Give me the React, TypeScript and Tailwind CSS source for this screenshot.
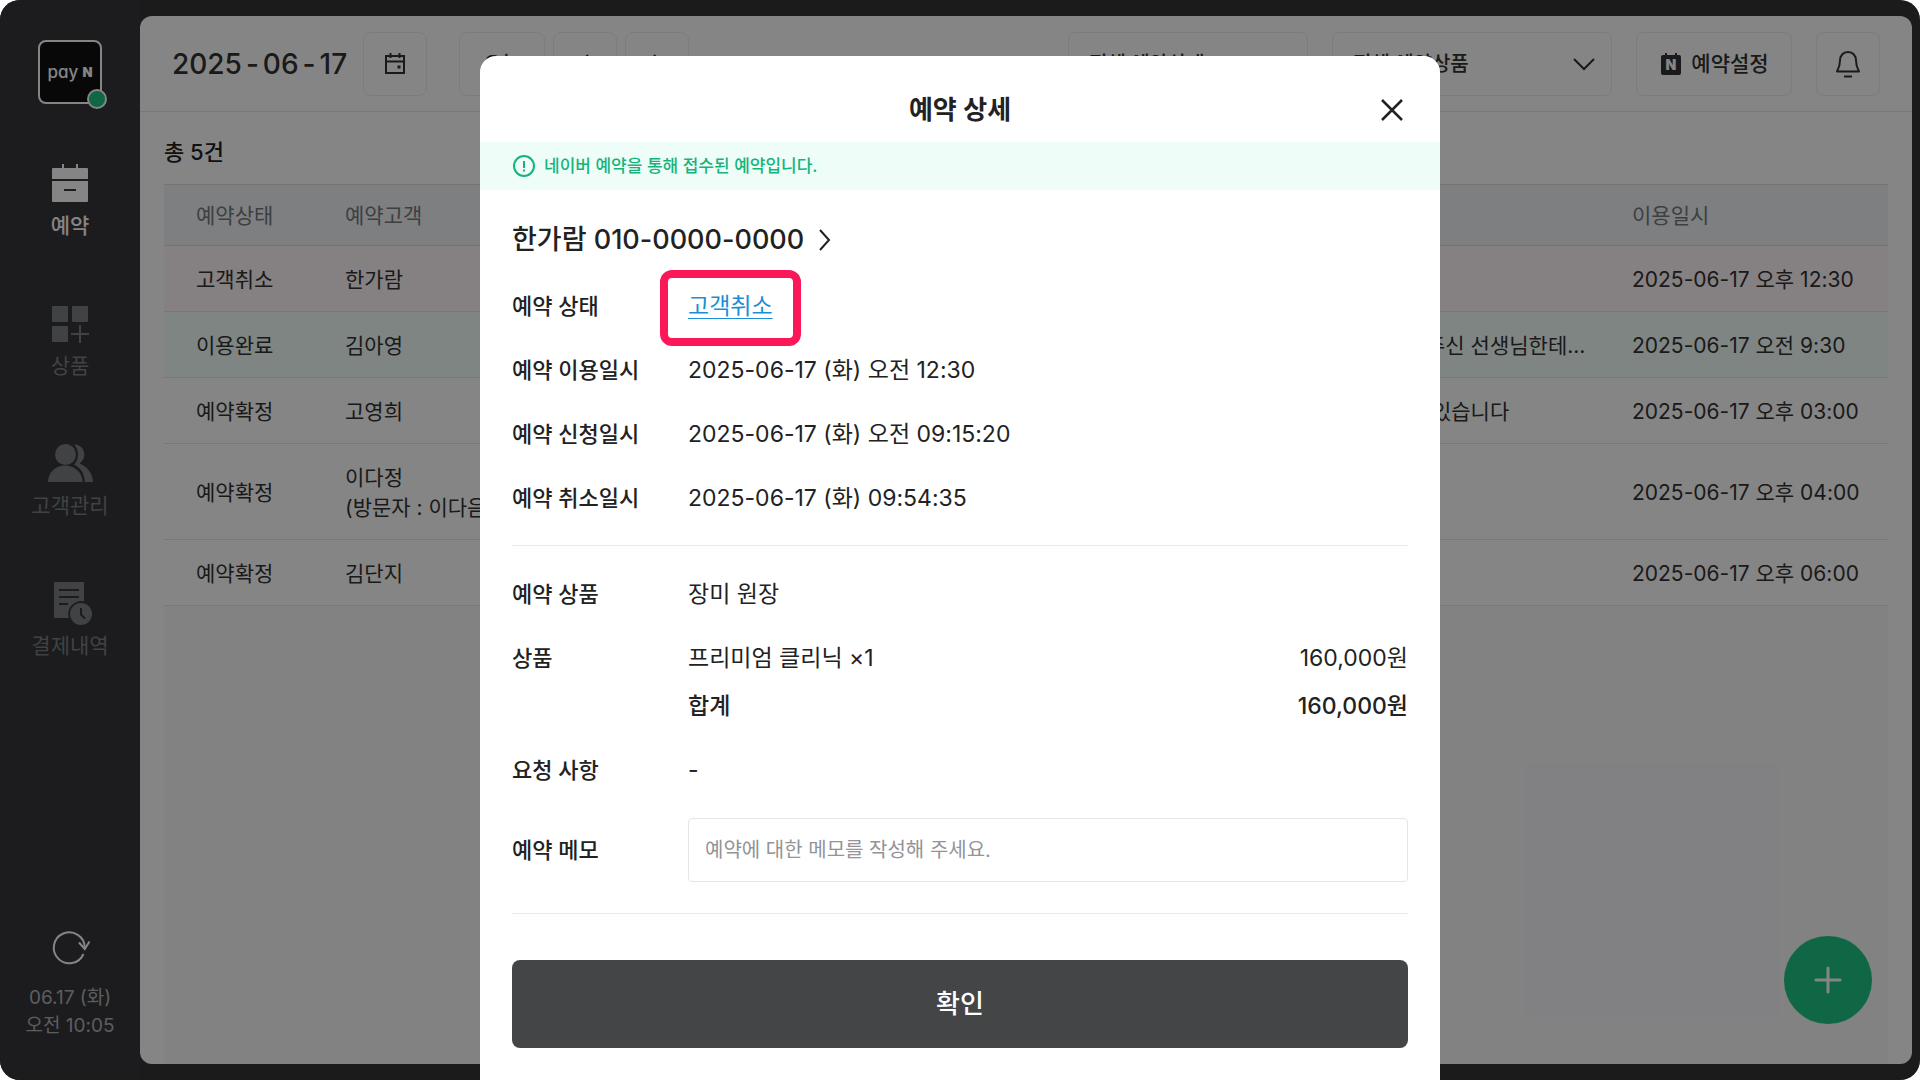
import type { ReactNode } from "react";

type NavItem = { href: string; label: string; icon: ReactNode; active?: boolean };

type Booking = {
  status: string;
  customer: string;
  visitor?: string;
  request?: string;
  date: string;
  tone: string;
};

const NAV: NavItem[] = [
  { href: "#bookings", label: "예약", icon: <BookingIcon />, active: true },
  { href: "#products", label: "상품", icon: <ProductIcon /> },
  { href: "#customers", label: "고객관리", icon: <CustomerIcon /> },
  { href: "#payments", label: "결제내역", icon: <PaymentIcon /> },
];

// Cancelled rows are pink, finished rows are mint.
const BOOKINGS: Booking[] = [
  { status: "고객취소", customer: "한가람", date: "2025-06-17 오후 12:30", tone: "bg-[#fff6f7]" },
  { status: "이용완료", customer: "김아영", request: "지난번에 시술 해주신 선생님한테...", date: "2025-06-17 오전 9:30", tone: "bg-[#f2fffb]" },
  { status: "예약확정", customer: "고영희", request: "두피가 예민한 편 있습니다", date: "2025-06-17 오후 03:00", tone: "bg-white" },
  { status: "예약확정", customer: "이다정", visitor: "(방문자 : 이다음)", date: "2025-06-17 오후 04:00", tone: "bg-white" },
  { status: "예약확정", customer: "김단지", date: "2025-06-17 오후 06:00", tone: "bg-white" },
];

const outlined = "flex h-16 items-center justify-center rounded-lg border border-[#ebedee] bg-white";

function BookingIcon() {
  return (
    <svg viewBox="0 0 48 48" className="size-12" fill="currentColor" aria-hidden="true">
      <path d="M16 4h2v4h12V4h2v4h9a1 1 0 0 1 1 1v10H6V9a1 1 0 0 1 1-1h9z" />
      <path fillRule="evenodd" d="M6 21h36v20a1 1 0 0 1-1 1H7a1 1 0 0 1-1-1zm12 8v2h12v-2z" />
    </svg>
  );
}

function ProductIcon() {
  return (
    <svg viewBox="0 0 48 48" className="size-12" fill="currentColor" aria-hidden="true">
      <rect x="6" y="6" width="16" height="16" rx="1" />
      <rect x="26" y="6" width="16" height="16" rx="1" />
      <rect x="6" y="26" width="16" height="16" rx="1" />
      <path d="M33 25h2v8h8v2h-8v8h-2v-8h-8v-2h8z" />
    </svg>
  );
}

function CustomerIcon() {
  return (
    <svg viewBox="0 0 48 48" className="size-12" fill="currentColor" aria-hidden="true">
      <circle cx="19.5" cy="14.5" r="10.5" />
      <path d="M2 42c0-9.500 7.500-16.500 17-16.500S36.500 32.500 36.500 42z" />
      <path d="M28 4.200a10.400 10.400 0 0 1 5.500 19.200C41 26.500 46.500 32.500 47 42h-8.200c0-7-3.200-12.800-8.600-16.200l-2-1.400C33.200 19.500 33.500 10 28 4.200z" />
    </svg>
  );
}

function PaymentIcon() {
  return (
    <svg viewBox="0 0 48 48" className="size-12" fill="currentColor" aria-hidden="true">
      <path d="M9 2h28a1 1 0 0 1 1 1v18.400A13 13 0 0 0 22.800 38H9a1 1 0 0 1-1-1V3a1 1 0 0 1 1-1z" />
      <path d="M13 10h20M13 17h20M13 24h9" stroke="#36363a" strokeWidth="2" />
      <circle cx="35" cy="34" r="11" />
      <path d="M35 28v6.500l4 4" stroke="#36363a" strokeWidth="2" fill="none" />
    </svg>
  );
}

function Chevron({ d, className }: { d: string; className: string }) {
  return (
    <svg viewBox="0 0 24 24" className={className} fill="none" stroke="currentColor" strokeWidth="2" aria-hidden="true">
      <path d={d} />
    </svg>
  );
}

function Sidebar() {
  return (
    <aside className="flex w-35 shrink-0 flex-col items-center bg-[#36363a] pt-10 pb-10">
      <a href="#home" className="relative flex size-16 items-center justify-center rounded-lg border-2 border-white bg-[#101012] text-white">
        <span className="text-[17px] leading-6 font-medium [font-feature-settings:'cv11']">pay</span>
        <span className="ml-1 text-[13px] leading-6 font-black">N</span>
        <span className="absolute -right-[7px] -bottom-[7px] size-5 rounded-full border-2 border-white bg-[#1dc687]" />
      </a>

      <nav className="mt-14 flex flex-col gap-15">
        {NAV.map((item) => (
          <a
            key={item.href}
            href={item.href}
            className={`flex flex-col items-center gap-1 text-[21px] leading-7 ${item.active ? "font-medium text-white" : "text-[#7b7f83]"}`}
          >
            {item.icon}
            {item.label}
          </a>
        ))}
      </nav>

      <button type="button" aria-label="새로고침" className="mt-auto text-white">
        <svg viewBox="0 0 40 40" className="size-10" fill="none" stroke="currentColor" strokeWidth="2" aria-hidden="true">
          <path d="M33.500 26A15.500 15.500 0 1 1 34.800 19.500" />
          <path d="M29 14.500l5.800 6.500 4.700-7.500" />
        </svg>
      </button>
      <p className="mt-4 text-center text-[19px] leading-7 text-[#b0b3b6]">
        06.17 (화)
        <br />
        오전 10:05
      </p>
    </aside>
  );
}

function Toolbar() {
  return (
    <header className="flex h-24 items-center border-b border-[#e4e6e8] px-8 text-xl text-[#333]">
      <h1 className="flex gap-1 text-[28px] leading-10 font-medium">
        <span>2025</span>
        <span>-</span>
        <span>06</span>
        <span>-</span>
        <span>17</span>
      </h1>
      <button type="button" aria-label="날짜 선택" className={`${outlined} ml-4 w-16`}>
        <svg viewBox="0 0 24 24" className="size-6" fill="none" stroke="currentColor" strokeWidth="2" aria-hidden="true">
          <path d="M3 4h18v17H3zM3 9.500h18M7.500 1v5M16.500 1v5" />
          <path d="M14.500 13.500h3v3h-3z" fill="currentColor" stroke="none" />
        </svg>
      </button>
      <button type="button" className={`${outlined} ml-8 w-[86px] font-medium`}>오늘</button>
      <button type="button" aria-label="이전" className={`${outlined} ml-2 w-16`}>
        <Chevron d="M15 3l-8 8 8 8" className="size-6" />
      </button>
      <button type="button" aria-label="다음" className={`${outlined} ml-2 w-16`}>
        <Chevron d="M9 3l8 8-8 8" className="size-6" />
      </button>

      <div className="ml-auto flex gap-6">
        <div className="relative">
          <select aria-label="예약상태" className="h-16 w-60 appearance-none rounded-lg border border-[#ebedee] bg-white pl-5 font-medium">
            <option>전체 예약상태</option>
          </select>
          <Chevron d="M2 7l10 10L22 7" className="pointer-events-none absolute top-5 right-4 size-6" />
        </div>
        <div className="relative">
          <select aria-label="예약상품" className="h-16 w-70 appearance-none rounded-lg border border-[#ebedee] bg-white pl-5 font-medium">
            <option>전체 예약상품</option>
          </select>
          <Chevron d="M2 7l10 10L22 7" className="pointer-events-none absolute top-5 right-4 size-6" />
        </div>
        <button type="button" className={`${outlined} w-39 gap-2 text-[21px] font-medium`}>
          <svg viewBox="0 0 24 24" className="size-6" aria-hidden="true">
            <path d="M6 1h2v2h8V1h2v2h2a2 2 0 0 1 2 2v16a2 2 0 0 1-2 2H4a2 2 0 0 1-2-2V5a2 2 0 0 1 2-2h2z" fill="currentColor" />
            <text x="12" y="18" textAnchor="middle" fontSize="14" fontWeight="900" fill="#fff">N</text>
          </svg>
          예약설정
        </button>
        <button type="button" aria-label="알림" className={`${outlined} w-16`}>
          <svg viewBox="0 0 28 28" className="size-7" fill="none" stroke="currentColor" strokeWidth="2" aria-hidden="true">
            <path d="M14 2c-5 0-8 3.800-8 8.500 0 4.500-1 7.500-3 11h22c-2-3.500-3-6.500-3-11C22 5.800 19 2 14 2z" strokeLinejoin="round" />
            <path d="M10 26.500h8" />
          </svg>
        </button>
      </div>
    </header>
  );
}

function BookingTable() {
  return (
    <table className="w-full table-fixed border-separate border-spacing-0 text-left text-[21px] leading-[30px] text-[#333]">
      <colgroup>
        <col className="w-[149px]" />
        <col />
        <col className="w-[353px]" />
        <col className="w-[288px]" />
      </colgroup>
      <thead className="bg-[#f0f4f6] text-[#777a7e]">
        <tr className="[&>th]:border-y [&>th]:border-[#dddfe1] [&>th]:pt-4 [&>th]:pb-[14px] [&>th]:pl-8 [&>th]:font-normal">
          <th>예약상태</th>
          <th>예약고객</th>
          <th aria-label="요청사항" />
          <th>이용일시</th>
        </tr>
      </thead>
      <tbody>
        {BOOKINGS.map((b) => (
          <tr
            key={b.date}
            className={`${b.tone} [&>td]:border-b [&>td]:border-[#e4e6e8] [&>td]:pt-[19px] [&>td]:pb-4 [&>td]:pl-8 [&>td]:whitespace-nowrap`}
          >
            <td>{b.status}</td>
            <td>
              {b.customer}
              {b.visitor && <div>{b.visitor}</div>}
            </td>
            <td>{b.request}</td>
            <td>{b.date}</td>
          </tr>
        ))}
      </tbody>
    </table>
  );
}

function Row({ label, children }: { label: string; children: ReactNode }) {
  return (
    <div className="flex">
      <dt className="w-44 shrink-0 font-medium">{label}</dt>
      <dd className="flex-1 text-[23px]">{children}</dd>
    </div>
  );
}

function BookingDialog() {
  return (
    <section role="dialog" aria-labelledby="dialog-title" className="flex w-full max-w-[960px] flex-col rounded-t-2xl bg-white text-[22px] leading-8 text-[#222]">
      <div className="relative px-8 pt-9 pb-[14px]">
        <h2 id="dialog-title" className="text-center text-[26px] leading-9 font-semibold">예약 상세</h2>
        <button type="button" aria-label="닫기" className="absolute top-9 right-8">
          <svg viewBox="0 0 32 36" className="h-9 w-8" fill="none" stroke="currentColor" strokeWidth="2.5" aria-hidden="true">
            <path d="M6 8l20 20M26 8L6 28" />
          </svg>
        </button>
      </div>

      <p className="flex h-12 items-center gap-2 bg-[#effdf8] px-8 text-[17px] leading-6 font-medium text-[#16b47c]">
        <svg viewBox="0 0 24 24" className="size-6" fill="none" stroke="currentColor" strokeWidth="2" aria-hidden="true">
          <circle cx="12" cy="12" r="10" />
          <path d="M12 7v7M12 15.500v2" />
        </svg>
        네이버 예약을 통해 접수된 예약입니다.
      </p>

      <div className="flex flex-col gap-8 px-8 pt-8">
        <a href="#customer" className="flex items-center gap-2 text-[27px] leading-9 font-medium">
          한가람 010-0000-0000
          <Chevron d="M8 2l9 10-9 10" className="size-6" />
        </a>

        <dl className="flex flex-col gap-8">
          <Row label="예약 상태">
            <a href="#status" className="relative inline-block text-[#1a8fd8] underline decoration-1 underline-offset-4">
              고객취소
              <span className="absolute -inset-x-7 -top-5 -bottom-6 rounded-xl border-8 border-[#fb1858]" />
            </a>
          </Row>
          <Row label="예약 이용일시">2025-06-17 (화) 오전 12:30</Row>
          <Row label="예약 신청일시">2025-06-17 (화) 오전 09:15:20</Row>
          <Row label="예약 취소일시">2025-06-17 (화) 09:54:35</Row>
        </dl>

        <dl className="-mt-px flex flex-col gap-8 border-y border-[#e8e9ea] pt-8 pb-[31px]">
          <Row label="예약 상품">장미 원장</Row>
          <Row label="상품">
            <div className="flex justify-between">
              <span>프리미엄 클리닉 ×1</span>
              <span>160,000원</span>
            </div>
            <div className="mt-4 flex justify-between font-medium">
              <span>합계</span>
              <span>160,000원</span>
            </div>
          </Row>
          <Row label="요청 사항">-</Row>
          <div className="flex items-center">
            <dt className="w-44 shrink-0 font-medium">
              <label htmlFor="memo">예약 메모</label>
            </dt>
            <dd className="flex-1">
              <input
                id="memo"
                type="text"
                placeholder="예약에 대한 메모를 작성해 주세요."
                className="block h-16 w-full rounded border border-[#e4e5e7] px-4 text-xl placeholder:text-[#929497]"
              />
            </dd>
          </div>
        </dl>

        <button type="button" className="mt-[14px] h-22 rounded-lg bg-[#444546] text-[26px] font-medium text-white">확인</button>
      </div>
    </section>
  );
}

export default function App() {
  return (
    <div className="relative flex h-screen overflow-hidden rounded-[20px] bg-[#353535] font-['Inter','Noto_Sans_CJK_KR',sans-serif]">
      <Sidebar />
      <main className="relative my-4 mr-2 flex min-w-0 flex-1 flex-col overflow-hidden rounded-xl bg-white">
        <Toolbar />
        <div className="flex flex-1 flex-col px-6 pt-6">
          <p className="pb-4 text-[22px] leading-8 font-medium text-[#222]">총 5건</p>
          <BookingTable />
          <div className="flex-1 bg-[#f9f9fb]" />
        </div>
        <button type="button" aria-label="예약 추가" className="absolute right-10 bottom-10 flex size-22 items-center justify-center rounded-full bg-[#1dc687] text-white">
          <svg viewBox="0 0 28 28" className="size-7" stroke="currentColor" strokeWidth="3" strokeLinecap="round" aria-hidden="true">
            <path d="M14 2v24M2 14h24" />
          </svg>
        </button>
      </main>

      <div className="absolute inset-0 flex justify-center bg-black/48 pt-14">
        <BookingDialog />
      </div>
    </div>
  );
}
